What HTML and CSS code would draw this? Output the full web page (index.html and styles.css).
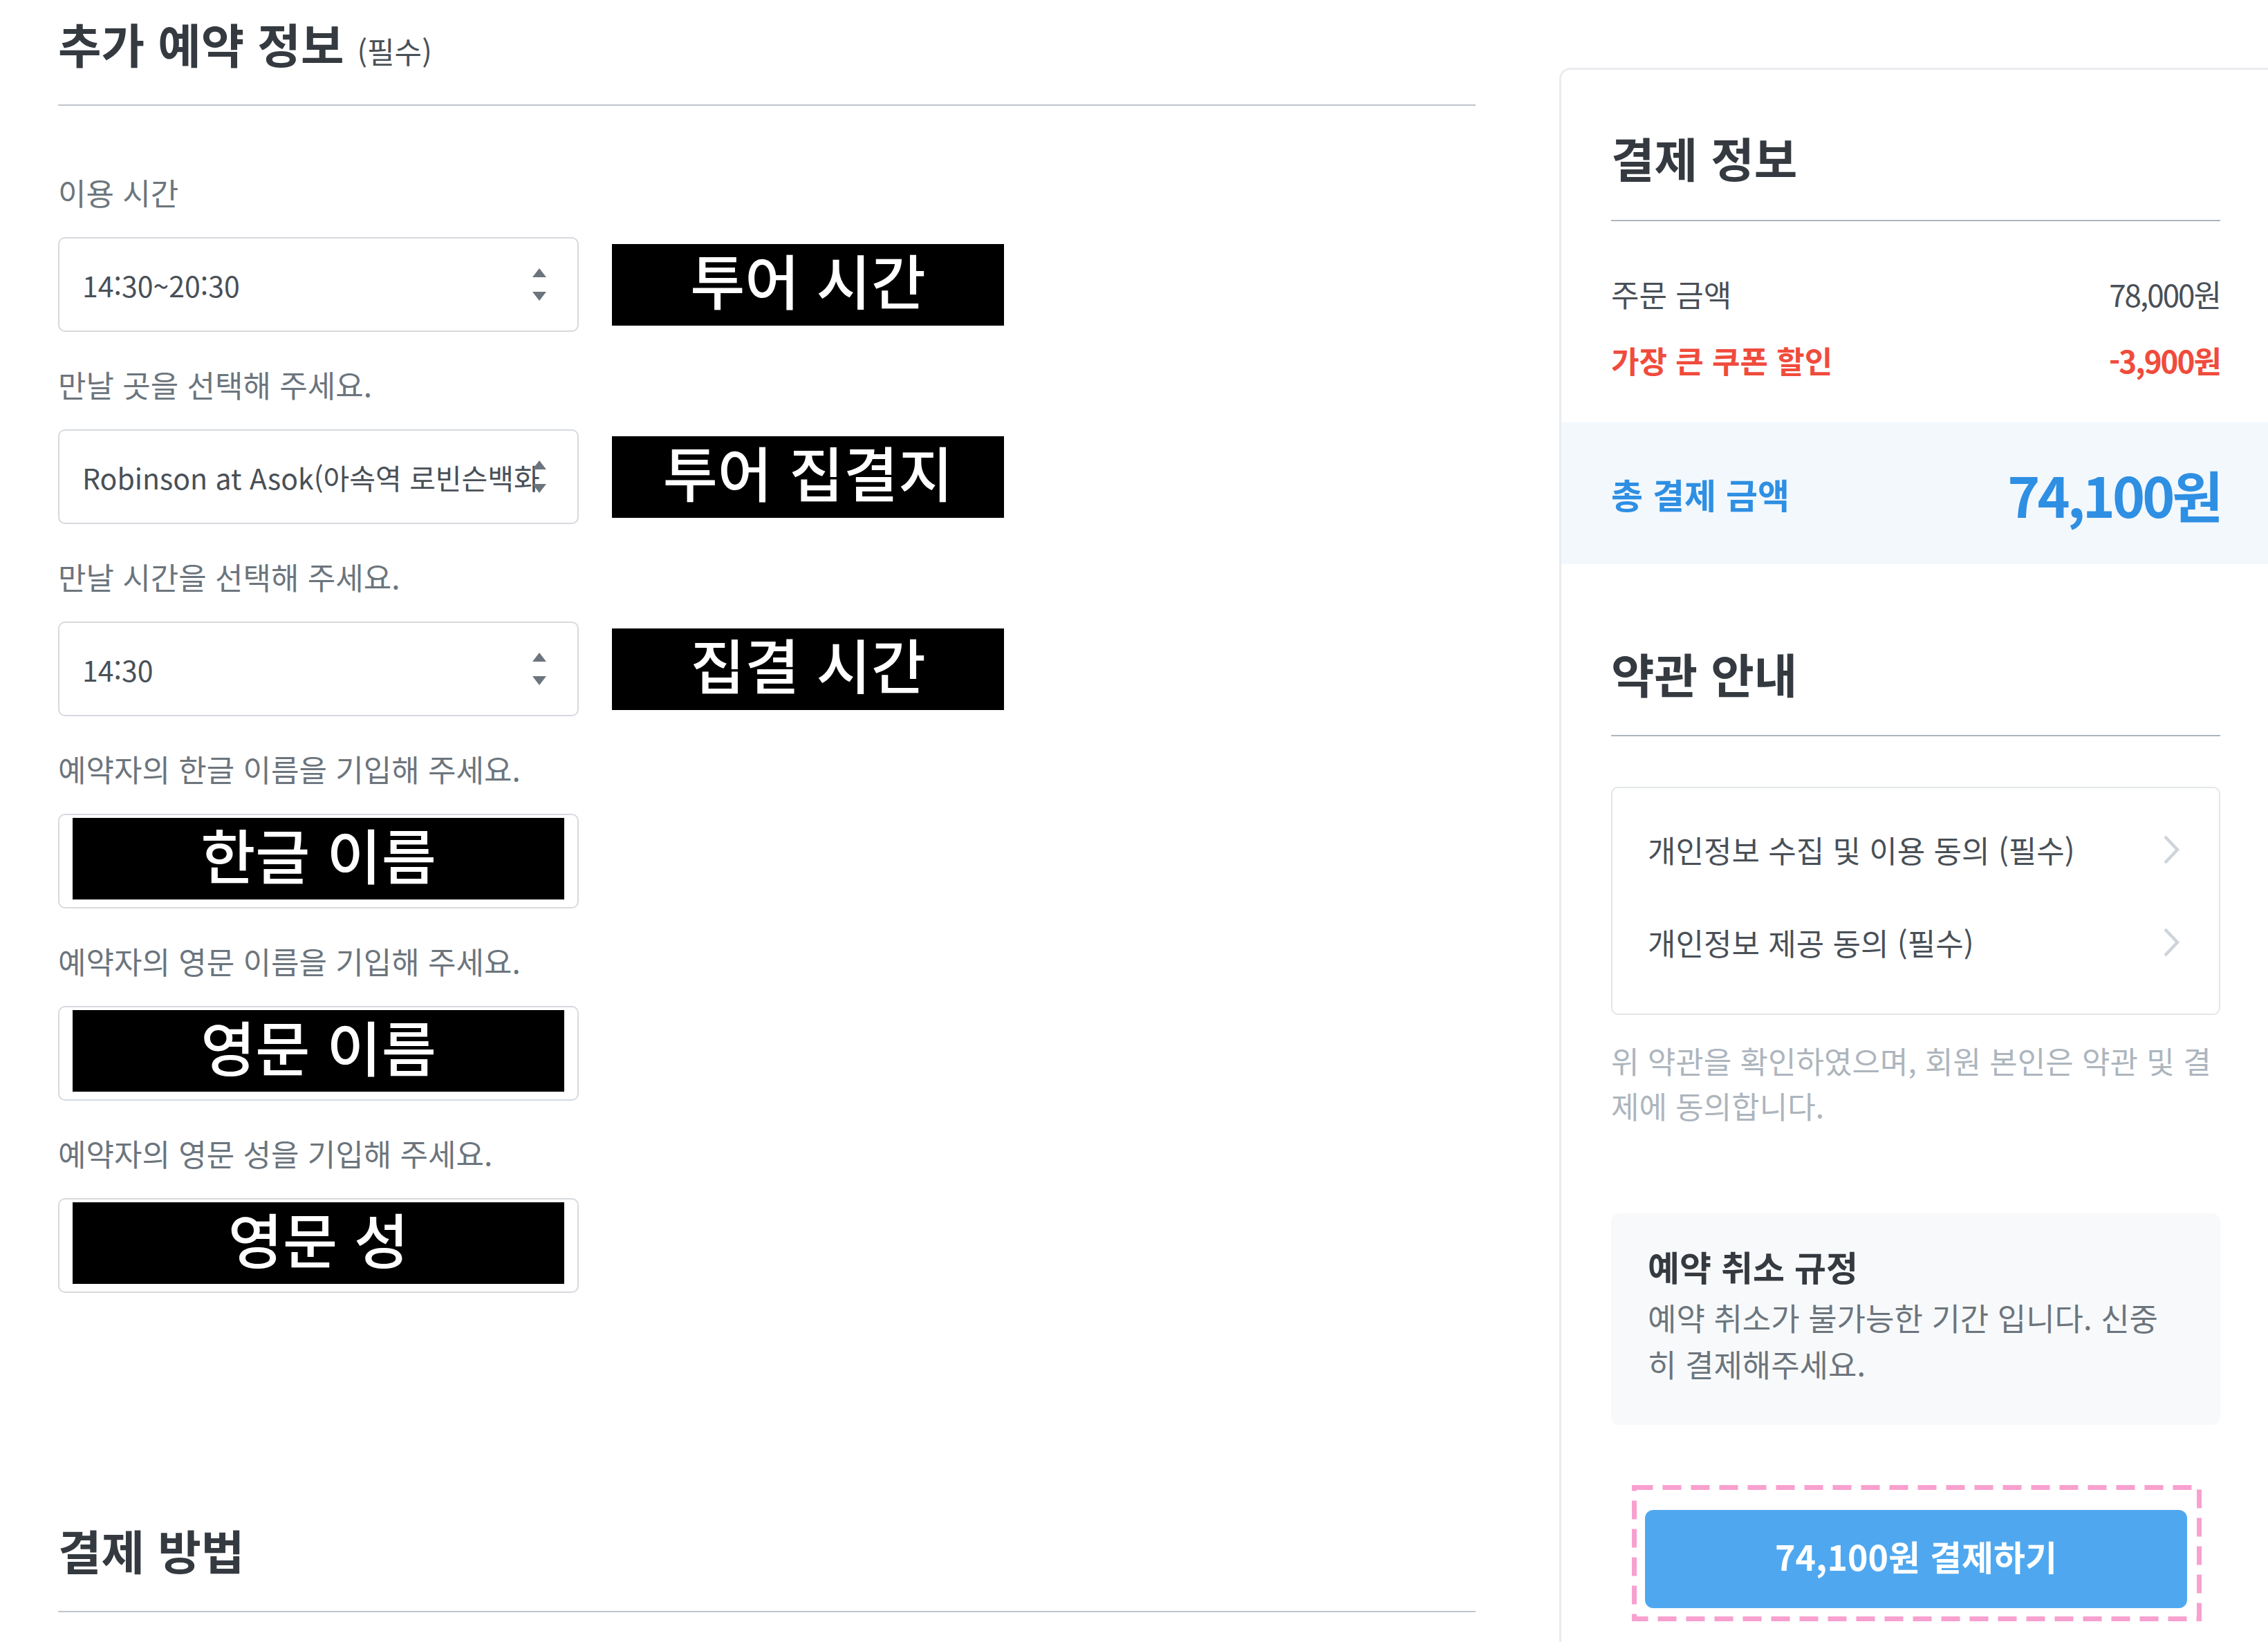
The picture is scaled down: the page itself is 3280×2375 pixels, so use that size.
FILE: index.html
```html
<!DOCTYPE html>
<html lang="ko">
<head>
	<meta charset="UTF-8">
	<title>예약하기</title>
	<link rel="stylesheet" href="styles.css">
</head>
<body>
	<div class="page">
		<div class="form-col">
			<h2 class="sec-title">추가 예약 정보 <small>(필수)</small></h2>
			<div class="fields">
				<div class="field">
					<div class="field-label">이용 시간</div>
					<div class="field-row">
						<div class="select">
							<span class="select-text">14:30~20:30</span>
							<svg class="spin" width="22" height="48" viewBox="0 0 22 48"><path d="M11 0 L21 13 L1 13 Z M1 34 L21 34 L11 47 Z" fill="#6c757d"/></svg>
						</div>
						<div class="mask">투어 시간</div>
					</div>
				</div>
				<div class="field">
					<div class="field-label">만날 곳을 선택해 주세요.</div>
					<div class="field-row">
						<div class="select">
							<span class="select-text">Robinson at Asok(아속역 로빈슨백화</span>
							<svg class="spin" width="22" height="48" viewBox="0 0 22 48"><path d="M11 0 L21 13 L1 13 Z M1 34 L21 34 L11 47 Z" fill="#6c757d"/></svg>
						</div>
						<div class="mask">투어 집결지</div>
					</div>
				</div>
				<div class="field">
					<div class="field-label">만날 시간을 선택해 주세요.</div>
					<div class="field-row">
						<div class="select">
							<span class="select-text">14:30</span>
							<svg class="spin" width="22" height="48" viewBox="0 0 22 48"><path d="M11 0 L21 13 L1 13 Z M1 34 L21 34 L11 47 Z" fill="#6c757d"/></svg>
						</div>
						<div class="mask">집결 시간</div>
					</div>
				</div>
				<div class="field">
					<div class="field-label">예약자의 한글 이름을 기입해 주세요.</div>
					<div class="input"><div class="mask mask-in">한글 이름</div></div>
				</div>
				<div class="field">
					<div class="field-label">예약자의 영문 이름을 기입해 주세요.</div>
					<div class="input"><div class="mask mask-in">영문 이름</div></div>
				</div>
				<div class="field">
					<div class="field-label">예약자의 영문 성을 기입해 주세요.</div>
					<div class="input"><div class="mask mask-in">영문 성</div></div>
				</div>
			</div>
			<h2 class="sec-title pay-title">결제 방법</h2>
		</div>

		<div class="card">
			<div class="card-sec">
				<h2 class="sec-title">결제 정보</h2>
				<div class="rows">
					<div class="row"><span>주문 금액</span><span class="num">78,000원</span></div>
					<div class="row row-red"><span>가장 큰 쿠폰 할인</span><span class="num">-3,900원</span></div>
				</div>
			</div>
			<div class="total">
				<span class="total-label">총 결제 금액</span>
				<span class="total-price">74,100원</span>
			</div>
			<div class="card-sec terms-sec">
				<h2 class="sec-title">약관 안내</h2>
				<ul class="terms">
					<li>개인정보 수집 및 이용 동의 (필수)<svg width="28" height="44" viewBox="0 0 28 44"><path d="M5 3 L23 22 L5 41" fill="none" stroke="#ced4da" stroke-width="4.5"/></svg></li>
					<li>개인정보 제공 동의 (필수)<svg width="28" height="44" viewBox="0 0 28 44"><path d="M5 3 L23 22 L5 41" fill="none" stroke="#ced4da" stroke-width="4.5"/></svg></li>
				</ul>
				<p class="agree-note">위 약관을 확인하였으며, 회원 본인은 약관 및 결<br>제에 동의합니다.</p>
				<div class="cancel-box">
					<div class="cancel-title">예약 취소 규정</div>
					<p class="cancel-text">예약 취소가 불가능한 기간 입니다. 신중<br>히 결제해주세요.</p>
				</div>
				<div class="pay-wrap">
					<svg class="dash" viewBox="0 0 824 197" preserveAspectRatio="none"><rect x="3.5" y="3.5" width="817" height="190" fill="none" stroke="#f8a0cf" stroke-width="7" stroke-dasharray="27 14"/></svg>
					<button class="pay-btn">74,100원 결제하기</button>
				</div>
			</div>
		</div>
	</div>
</body>
</html>
```

FILE: styles.css
```css
body, h2, p, ul, li {
	margin: 0;
	padding: 0;
	list-style: none;
}
body {
	height: 2375px;
	overflow: hidden;
	background: #fff;
	font-family: "Noto Sans CJK KR", "Noto Sans", sans-serif;
	color: #495057;
}
.page {
	display: flex;
	gap: 121px;
	padding-left: 84px;
}
.form-col {
	width: 2050px;
	flex-shrink: 0;
}
.sec-title {
	font-size: 68px;
	line-height: 80px;
	font-weight: 700;
	color: #343a40;
	padding: 23px 0 48px;
	border-bottom: 2px solid #bfc5cb;
}
.sec-title small {
	font-size: 43px;
	line-height: 1;
	font-weight: 400;
	color: #495057;
}
.fields {
	margin-top: 98px;
}
.field {
	margin-bottom: 49px;
}
.field-label {
	font-size: 44px;
	line-height: 54px;
	color: #6c757d;
	margin-bottom: 38px;
}
.field-row {
	display: flex;
	align-items: center;
	gap: 48px;
}
.select, .input {
	width: 753px;
	height: 137px;
	box-sizing: border-box;
	border: 2px solid #d6dade;
	border-radius: 10px;
	background: #fff;
}
.select {
	position: relative;
	display: flex;
	align-items: center;
	padding: 0 20px 0 33px;
}
.select-text {
	font-size: 41px;
	white-space: nowrap;
	color: #495057;
}
.spin {
	position: absolute;
	right: 44px;
	top: 43px;
}
.mask {
	width: 567px;
	height: 118px;
	box-sizing: border-box;
	background: #000;
	color: #fff;
	display: flex;
	align-items: center;
	justify-content: center;
	padding-bottom: 16px;
	font-size: 86px;
	font-weight: 500;
}
.input {
	padding: 4px 19px 11px;
}
.mask-in {
	width: 100%;
	height: 100%;
}
.pay-title {
	margin-top: 309px;
}

.card {
	width: 1040px;
	flex-shrink: 0;
	margin-top: 98px;
	box-sizing: border-box;
	border: 3px solid #e9ecef;
	border-radius: 16px 0 0 0;
	padding: 87px 0 120px;
}
.card-sec {
	padding: 0 81px 0 72px;
}
.card .sec-title {
	padding: 0 0 50px;
	border-bottom-color: #adb5bd;
}
.rows {
	margin-top: 57px;
}
.row {
	display: flex;
	justify-content: space-between;
	font-size: 44px;
	line-height: 96px;
	color: #495057;
}
.row .num {
	letter-spacing: -2px;
}
.row-red {
	color: #f04b3c;
	font-weight: 700;
}
.total {
	margin-top: 42px;
	height: 205px;
	display: flex;
	align-items: center;
	justify-content: space-between;
	padding: 0 81px 0 72px;
	background: #f3f8fd;
	color: #2e8fe3;
	font-weight: 700;
}
.total-label {
	font-size: 50px;
}
.total-price {
	font-size: 80px;
	letter-spacing: -4px;
}
.terms-sec {
	padding-top: 118px;
}
.terms-sec .sec-title {
	padding-bottom: 49px;
}
.terms {
	margin-top: 73px;
	border: 2px solid #e3e6e9;
	border-radius: 10px;
	padding: 22px 0 36px;
}
.terms li {
	height: 134px;
	display: flex;
	align-items: center;
	justify-content: space-between;
	padding: 0 55px 0 51px;
	font-size: 44px;
	color: #495057;
}
.agree-note {
	margin-top: 34px;
	font-size: 44px;
	line-height: 65px;
	white-space: nowrap;
	color: #adb5bd;
}
.cancel-box {
	margin-top: 123px;
	background: #f8f9fa;
	border-radius: 12px;
	padding: 46px 40px 55px 53px;
}
.cancel-title {
	font-size: 50px;
	line-height: 60px;
	font-weight: 700;
	color: #343a40;
}
.cancel-text {
	margin-top: 11px;
	font-size: 45px;
	line-height: 67px;
	white-space: nowrap;
	color: #6c757d;
}
.pay-wrap {
	position: relative;
	margin: 87px 27px 0 30px;
	padding: 36px 21px 19px 19px;
}
.dash {
	position: absolute;
	left: 0;
	top: 0;
	width: 100%;
	height: 100%;
}
.pay-btn {
	display: block;
	width: 100%;
	height: 142px;
	padding: 0 0 10px;
	border: none;
	border-radius: 12px;
	background: #4fa8ef;
	color: #fff;
	font-family: "Noto Sans CJK KR", "Noto Sans", sans-serif;
	font-size: 50px;
	font-weight: 700;
}
```
